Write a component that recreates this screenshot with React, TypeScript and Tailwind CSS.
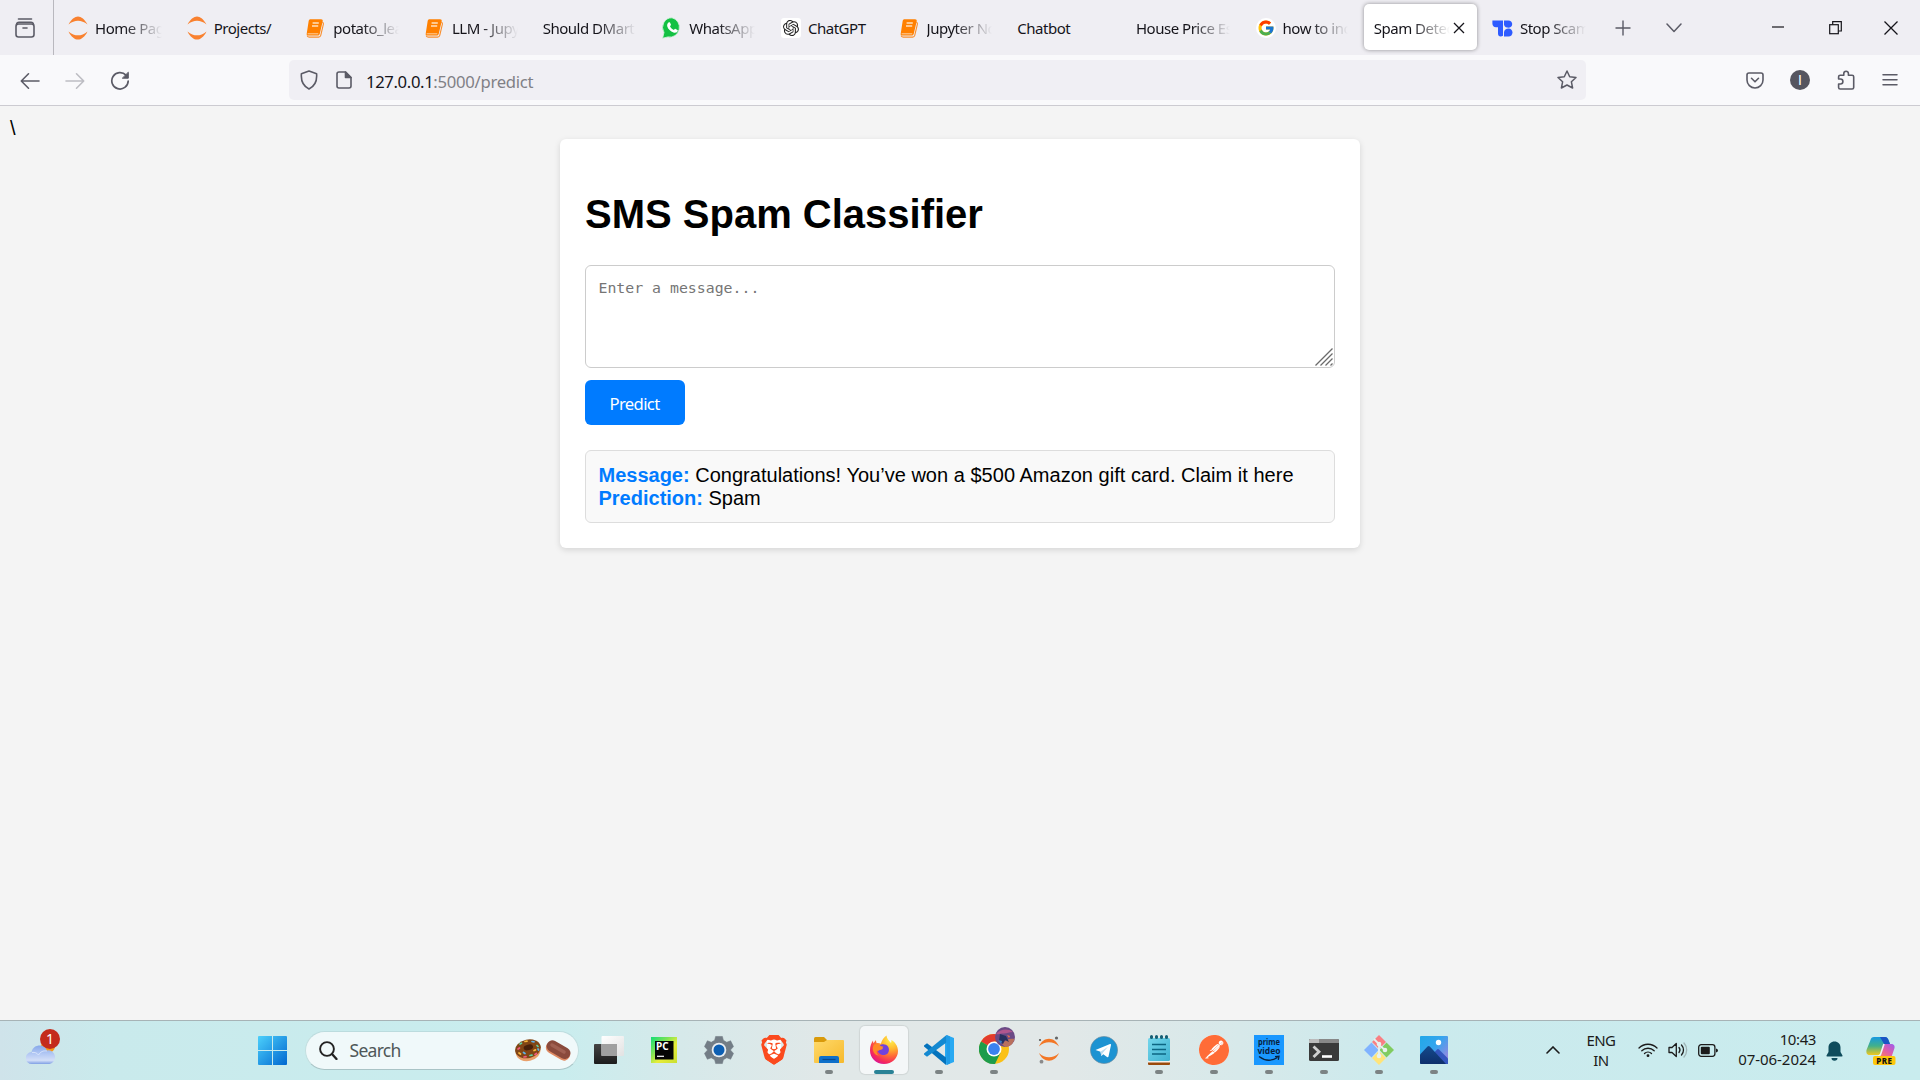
import React from "react";
import { FcGoogle } from "react-icons/fc";
import { SiOpenai, SiBrave, SiPostman } from "react-icons/si";

const UI = "font-['Noto_Sans','Open_Sans',sans-serif]";

/* ---------- Tab favicons ---------- */

const JupyterFav = () => (
  <svg width="20" height="24" viewBox="0 0 20 24" className="shrink-0">
    <path d="M.5 8.600C3 3.200 7 .4 10 .4s7 2.800 9.500 8.200C16.500 5.800 13 4.700 10 4.700S3.500 5.800.5 8.600Z" fill="#f9812f" />
    <path d="M.5 15.400C3 20.800 7 23.600 10 23.600s7-2.800 9.500-8.200c-3 2.800-6.500 3.900-9.500 3.900s-6.500-1.100-9.500-3.900Z" fill="#f9812f" />
  </svg>
);

const BookFav = () => (
  <svg width="20" height="20" viewBox="0 0 20 20" className="mr-px shrink-0">
    <path d="M5.500 1.200h10.600c1.200 0 1.900.9 1.600 2.100l-3 12.800c-.2.900-1 1.500-1.900 1.500H3.200c-1.200 0-1.700-.8-1.500-1.800l2-13c.2-1 .9-1.600 1.800-1.600Z" fill="#ff8000" />
    <path d="M17.200 4.300c1 .2 1.400.9 1.200 1.800l-2.700 11.400c-.2 1-1 1.600-2 1.600H4.100c-1 0-1.800-.6-2-1.400" fill="none" stroke="#f98f2f" strokeWidth="1.100" />
    <path d="m7.600 5 6.200 0M7 8l6.200 0" stroke="#ffe0bd" strokeWidth="1.500" />
    <path d="M2.600 15.800h10.700" stroke="#ffd0a0" strokeWidth="1" />
  </svg>
);

const WhatsFav = () => (
  <span className="ml-px flex h-5 w-5 shrink-0 items-center justify-center">
    <svg width="20" height="22" viewBox="0 0 20 22">
      <path d="M10 .8a9.300 9.600 0 0 0-8 14.700L.6 21.200l5.400-1.300A9.300 9.700 0 1 0 10 .8Z" fill="#13c143" stroke="#d6f3de" strokeWidth=".8" />
      <path d="M6.500 5.500c.5-.5 1.200-.4 1.500.1l.9 1.900c.2.400 0 .8-.9 1.700.9 1.700 2 2.900 3.900 3.800.8-1 1.200-1.300 1.600-1.100l2 1c.4.200.3 1-.1 1.700-.8 1.200-2.300 1.400-3.900.9-3-1-5.400-3.400-6.200-6-.4-1.600.1-3 1.200-4Z" fill="#fff" />
    </svg>
  </span>
);

const GptFav = () => (
  <span className="ml-px flex h-5 w-5 shrink-0 items-center justify-center rounded-[3px] bg-white">
    <SiOpenai size={16} color="#222" />
  </span>
);

const GoogleFav = () => (
  <span className="ml-px flex h-5 w-5 shrink-0 items-center justify-center rounded-full bg-white">
    <FcGoogle size={18} />
  </span>
);

const TbFav = () => (
  <svg width="21" height="17" viewBox="0 0 21 17" className="shrink-0">
    <path d="M2.200.4H11v15.400c-.7.500-1.400.8-2.300.8C7 16.600 6 15.300 6 13.500V7.200H4C1.800 7.200.4 5.700.4 3.800V.4Z" fill="#2e5bff" />
    <path d="M12 .4h4.400c2.200 0 3.800 1.500 3.800 3.700 0 2-1.300 3.600-3.300 3.600-2.300 0-4.300-.6-4.900-3Z" fill="#2e5bff" />
    <path d="M12 16.600V12c.4-2.200 2-3.500 4.600-3.500 2.300 0 3.900 1.700 3.900 4s-1.700 4.100-4 4.100Z" fill="#2e5bff" />
  </svg>
);

type TabInfo = { title: string; icon?: React.ReactNode; fade?: boolean };

const tabsBefore: TabInfo[] = [
  { title: "Home Page", icon: <JupyterFav />, fade: true },
  { title: "Projects/", icon: <JupyterFav /> },
  { title: "potato_leaf", icon: <BookFav />, fade: true },
  { title: "LLM - Jupyter", icon: <BookFav />, fade: true },
  { title: "Should DMart", fade: true },
  { title: "WhatsApp W", icon: <WhatsFav />, fade: true },
  { title: "ChatGPT", icon: <GptFav /> },
  { title: "Jupyter Not", icon: <BookFav />, fade: true },
  { title: "Chatbot" },
  { title: "House Price Est", fade: true },
  { title: "how to incr", icon: <GoogleFav />, fade: true },
];

const Title = ({ text, fade }: { text: string; fade?: boolean }) => (
  <span
    className={
      "min-w-0 flex-1 overflow-hidden whitespace-nowrap text-[15px] leading-6 tracking-[-0.48px] text-[#15141a] " +
      (fade ? "[mask-image:linear-gradient(to_right,black_calc(100%-38px),transparent_100%)]" : "")
    }
  >
    {text}
  </span>
);

const Tab = ({ title, icon, fade }: TabInfo) => (
  <div className="flex h-[55px] w-[118.67px] shrink-0 items-center gap-[7px] pl-[12px] pr-[13px] pt-[1px]">
    {icon}
    <Title text={title} fade={fade} />
  </div>
);

const TabStrip = () => (
  <div className="flex h-[55px] items-center bg-[#efeef3]">
    <div className="flex h-[55px] w-[54px] shrink-0 items-center border-r border-[#b9b8be] pl-[15px]">
      <svg width="20" height="20" viewBox="0 0 20 20" fill="none" stroke="#5b5b66" strokeWidth="1.600" strokeLinecap="round">
        <path d="M3.500 1h13" />
        <path d="M1.500 6.500c.2-1.500 1-2.300 2.500-2.300h12c1.500 0 2.300.8 2.500 2.300" />
        <rect x="1" y="6" width="18" height="13" rx="2.500" />
        <path d="M8 10h4" />
      </svg>
    </div>
    <div className="ml-[2px] flex">
      {tabsBefore.map((t) => (
        <Tab key={t.title} {...t} />
      ))}
      <div className="flex h-[55px] w-[118.67px] shrink-0 items-start px-[2.500px] pt-[4px]">
        <div className="flex h-[46px] w-full items-center rounded-[5px] bg-white pl-[10px] pr-[12px] pt-px shadow-[0_0_4px_rgba(0,0,0,0.4)]">
          <Title text="Spam Detec" fade />
          <svg width="12" height="12" viewBox="0 0 12 12" className="ml-[3px] shrink-0" stroke="#15141a" strokeWidth="1.300">
            <path d="m1 1 10 10M11 1 1 11" />
          </svg>
        </div>
      </div>
      <Tab title="Stop Scams" icon={<TbFav />} fade />
    </div>
    <svg width="16" height="16" viewBox="0 0 16 16" className="ml-[16.500px] mt-px shrink-0" stroke="#5b5b66" strokeWidth="1.400">
      <path d="M8 .5v15M.5 8h15" />
    </svg>
    <svg width="16" height="10" viewBox="0 0 16 10" className="ml-[34.500px] shrink-0" fill="none" stroke="#5b5b66" strokeWidth="1.500" strokeLinecap="round" strokeLinejoin="round">
      <path d="m1 1 7 7.500L15 1" />
    </svg>
    <svg width="12" height="12" viewBox="0 0 12 12" className="ml-[90px] shrink-0" stroke="#15141a" strokeWidth="1.200">
      <path d="M0 5h12" />
    </svg>
    <svg width="13" height="14" viewBox="0 0 13 14" className="ml-[45px] shrink-0" fill="none" stroke="#15141a" strokeWidth="1.200">
      <rect x=".7" y="3.700" width="8.600" height="9" />
      <path d="M3.700 3.500V.7h8.600v9.300H9.500" />
    </svg>
    <svg width="14" height="14" viewBox="0 0 14 14" className="ml-[42.500px] shrink-0" stroke="#15141a" strokeWidth="1.300">
      <path d="m.5.5 13 13M13.500.5l-13 13" />
    </svg>
  </div>
);

const NavBar = () => (
  <div className="flex h-[51px] items-center border-b border-[#cccbd1] bg-[#f9f9fb]">
    <svg width="20" height="18" viewBox="0 0 20 18" className="ml-[20px] mt-px" fill="none" stroke="#5b5b66" strokeWidth="1.600" strokeLinecap="round" strokeLinejoin="round">
      <path d="M19 9H1.500M8.500 1.800 1.300 9l7.200 7.200" />
    </svg>
    <svg width="20" height="18" viewBox="0 0 20 18" className="ml-[25px] mt-px" fill="none" stroke="#bdbdc3" strokeWidth="1.600" strokeLinecap="round" strokeLinejoin="round">
      <path d="M1 9h17.500M11.500 1.800 18.700 9l-7.200 7.200" />
    </svg>
    <svg width="20" height="20" viewBox="0 0 20 20" className="ml-[25px] mt-px" fill="none" stroke="#5b5b66" strokeWidth="1.700" strokeLinecap="round">
      <path d="M16 4.200A8.200 8.200 0 1 0 18.200 10" />
      <path d="M18.300 1.600v5.600h-5.600z" fill="#5b5b66" strokeWidth="1" strokeLinejoin="round" />
    </svg>
    <div className="ml-[159px] flex h-10 w-[1297px] items-center rounded-[5px] bg-[#f0eff4]">
      <svg width="18" height="20" viewBox="0 0 18 20" className="ml-[11px]" fill="none" stroke="#5b5b66" strokeWidth="1.600" strokeLinejoin="round">
        <path d="M9 1 16.600 3.800c.5 6-1.600 12.200-7.600 15.200C3 16 .9 9.800 1.400 3.800Z" />
      </svg>
      <svg width="16" height="18" viewBox="0 0 16 18" className="ml-[18px]" fill="none" stroke="#5b5b66" strokeWidth="1.600" strokeLinejoin="round">
        <path d="M3 1h6.500L15 6.500V15c0 1.300-.7 2-2 2H3c-1.300 0-2-.7-2-2V3c0-1.300.7-2 2-2Z" />
        <path d="M9.500 1v5.500H15Z" fill="#5b5b66" />
      </svg>
      <div className="ml-[14px] mt-[3px] flex-1 whitespace-nowrap text-[16.67px] leading-6 tracking-[-0.28px] text-[#808086]">
        <span className="tracking-[-0.36px] text-[#15141a]">127.0.0.1</span>:5000/predict
      </div>
      <svg width="20" height="20" viewBox="0 0 20 20" className="mr-[9px]" fill="none" stroke="#5b5b66" strokeWidth="1.500" strokeLinejoin="round">
        <path d="m10 1 2.700 5.700 6.300.8-4.600 4.300 1.200 6.200-5.600-3-5.600 3 1.200-6.200L1 7.500l6.300-.8Z" />
      </svg>
    </div>
    <svg width="18" height="17" viewBox="0 0 18 17" className="ml-[160px]" fill="none" stroke="#5b5b66" strokeWidth="1.600" strokeLinecap="round" strokeLinejoin="round">
      <path d="M3 1h12c1.300 0 2 .7 2 2v5a8 8 0 0 1-16 0V3c0-1.300.7-2 2-2Z" />
      <path d="m5.500 6.300 3.500 3.500 3.500-3.500" />
    </svg>
    <div className="ml-[26px] flex h-5 w-5 items-center justify-center rounded-full bg-[#55555f] font-['Liberation_Sans',Arial,sans-serif] text-[14px] leading-none text-white">I</div>
    <svg width="18" height="20" viewBox="0 0 18 20" className="ml-[26.500px]" fill="none" stroke="#5b5b66" strokeWidth="1.600" strokeLinejoin="round">
      <path d="M1.600 9V6.800c0-1 .6-1.600 1.600-1.600h3.600V3.500a2.300 2.300 0 0 1 4.600 0v1.700h3.700c1 0 1.600.6 1.600 1.600v10.600c0 1-.6 1.600-1.600 1.600H3.200c-1 0-1.600-.6-1.600-1.600V14h1.800a2.500 2.500 0 0 0 0-5Z" />
    </svg>
    <svg width="16" height="14" viewBox="0 0 16 14" className="ml-[27.500px]" stroke="#5b5b66" strokeWidth="1.500" strokeLinecap="round">
      <path d="M1 1.700h14M1 6.700h14M1 11.700h14" />
    </svg>
  </div>
);

const PageBody = () => (
  <div className="flex-1 bg-[#f4f4f4] pt-[11px] font-['Liberation_Sans',Arial,sans-serif] text-[20px] leading-[23px] text-black">
    <div className="h-[22px] pl-[10px]">\</div>
    <div className="mx-auto w-[800px] rounded-[6px] bg-white px-[25px] pb-[25px] pt-[52px] shadow-[0_2px_6px_rgba(0,0,0,0.13)]">
      <h1 className="mb-[28px] h-[46px] text-[40px] font-bold leading-[46px]">SMS Spam Classifier</h1>
      <div className="relative h-[103px] rounded-[6px] border border-[#ccc] bg-white pl-[12.500px] pt-[12px] font-['DejaVu_Sans_Mono',monospace] text-[14.85px] leading-5 text-[#757575]">
        Enter a message...
        <svg width="18" height="18" viewBox="0 0 18 18" className="absolute bottom-[1px] right-[1px]" stroke="#6b6b6b" strokeWidth="1.300">
          <path d="M.5 17.500 17.500.5M5.500 17.500l12-12M10.500 17.500l7-7M15.500 17.500l2-2" />
        </svg>
      </div>
      <button className={"mt-[12px] block h-[45px] w-[100px] rounded-[6px] bg-[#007bff] pr-px pt-[2px] text-[16.67px] leading-6 tracking-[-0.65px] text-white " + UI}>
        Predict
      </button>
      <div className="mt-[25px] h-[73px] rounded-[6px] border border-[#ddd] bg-[#f9f9f9] pl-[12.500px] pt-[13px]">
        <div><b className="text-[#007bff]">Message:</b> <span className="tracking-[0.02px]">Congratulations! You’ve won a $500 Amazon gift card. Claim it here</span></div>
        <div><b className="text-[#007bff]">Prediction:</b> Spam</div>
      </div>
    </div>
  </div>
);

/* ---------- Taskbar icons ---------- */

const Weather = () => (
  <svg width="36" height="38" viewBox="0 0 36 38">
    <defs>
      <linearGradient id="cloud" x1="0" y1="0" x2="0" y2="1">
        <stop offset="0" stopColor="#86a8ea" />
        <stop offset=".45" stopColor="#b3c8f4" />
        <stop offset=".8" stopColor="#d3dff8" />
        <stop offset="1" stopColor="#7f9fe4" />
      </linearGradient>
    </defs>
    <circle cx="22" cy="17" r="7" fill="#f59a1c" />
    <path d="M6 35a6 6 0 0 1-.5-12c1-4.500 4.700-6.500 8.100-6.500 3.400 0 6.400 2 7.300 5a6.800 6.800 0 1 1 2.600 13.500Z" fill="url(#cloud)" />
    <path d="M6 23.500c3-.5 5 .5 6.500 2.500 2-3.500 5-4.500 8.400-4" fill="none" stroke="#dbe6fc" strokeWidth=".9" />
    <circle cx="24" cy="10" r="10" fill="#c42b1c" />
    <text x="24" y="15" textAnchor="middle" fontSize="14" fill="#fff" fontFamily="Noto Sans">1</text>
  </svg>
);

const WindowsLogo = () => (
  <svg width="29" height="29" viewBox="0 0 29 29" className="shrink-0">
    <defs>
      <linearGradient id="win" x1="0" y1="0" x2="1" y2="1">
        <stop offset="0" stopColor="#4cd0fb" />
        <stop offset="1" stopColor="#0067d0" />
      </linearGradient>
    </defs>
    <path d="M1 0h13v14H0V1Q0 0 1 0ZM15 0h13q1 0 1 1v13H15ZM0 15h14v14H1q-1 0-1-1ZM15 15h14v13q0 1-1 1H15Z" fill="url(#win)" />
  </svg>
);

const Donut = () => (
  <svg width="58" height="28" viewBox="0 0 58 28">
    <ellipse cx="14" cy="15.500" rx="12.500" ry="9.500" fill="#e9a06b" transform="rotate(-12 14 15)" />
    <ellipse cx="14" cy="12.800" rx="13" ry="9.300" fill="#814515" transform="rotate(-12 14 13)" />
    <ellipse cx="14.500" cy="11.500" rx="4.800" ry="2.800" fill="#47200a" transform="rotate(-14 14 12)" />
    <g strokeWidth="1.700" strokeLinecap="round">
      <path d="m4 13 1.500-1M10 21l2-.4M21 18.500l1.500-1" stroke="#f05a7d" />
      <path d="m6 8 1.500-.8M16 19.500l2-.3M23 9.500l1 1" stroke="#5fd3a4" />
      <path d="m11 5.500 2-.4M5 17l1.500 1M20 14.500l1.500-.6" stroke="#f9b83c" />
      <path d="m18 5.500 2 .4M9.500 16.500l1.500 1M24 13l.6 1" stroke="#5db2e8" />
    </g>
    <rect x="31.500" y="8.500" width="26" height="12.500" rx="6" fill="#e08b63" transform="rotate(30 44 14)" />
    <rect x="32" y="7.500" width="25.500" height="11.500" rx="5.500" fill="#8a4a3c" transform="rotate(30 44 13)" />
    <path d="m38 9 12 7" stroke="#a06052" strokeWidth="3.500" strokeLinecap="round" />
  </svg>
);

const TaskView = () => (
  <svg width="30" height="28" viewBox="0 0 30 28">
    <defs>
      <linearGradient id="tvd" x1="0" y1="0" x2="0" y2="1"><stop offset="0" stopColor="#444" /><stop offset="1" stopColor="#1c1c1c" /></linearGradient>
      <linearGradient id="tvl" x1="0" y1="0" x2="1" y2="1"><stop offset="0" stopColor="#fff" /><stop offset="1" stopColor="#e2e2e2" /></linearGradient>
    </defs>
    <rect x="0" y="8" width="23" height="20" rx="1" fill="url(#tvd)" />
    <rect x="7.500" y="0" width="22.500" height="20" rx="1" fill="url(#tvl)" />
    <rect x="7.500" y="8" width="15.500" height="12" fill="#a0a0a0" />
  </svg>
);

const PyCharm = () => (
  <svg width="26" height="26" viewBox="0 0 26 26">
    <defs>
      <linearGradient id="pc" x1="0" y1="0" x2="1" y2="1">
        <stop offset="0" stopColor="#12dd77" /><stop offset=".35" stopColor="#7fe455" /><stop offset=".6" stopColor="#e8ed3a" /><stop offset="1" stopColor="#c9df31" />
      </linearGradient>
    </defs>
    <rect width="26" height="26" fill="url(#pc)" />
    <rect x="4" y="4" width="18.500" height="18.500" fill="#050505" />
    <text x="5" y="13" fontSize="10" fontWeight="700" fill="#fff" fontFamily="Noto Sans">PC</text>
    <path d="M6 19.300h7" stroke="#fff" strokeWidth="1.200" />
  </svg>
);

const Gear = () => (
  <svg width="30" height="30" viewBox="0 0 30 30">
    <path d="M11.500 1 18.500 1 19.500 5 23 7 27 5.500 30 11.500 26.800 15 30 18.500 27 24.500 23 23 19.500 25 18.500 29 11.500 29 10.500 25 7 23 3 24.500 0 18.500 3.200 15 0 11.500 3 5.500 7 7 10.500 5Z" fill="#737d86" stroke="#737d86" strokeWidth=".6" strokeLinejoin="round" transform="translate(.5 .5) scale(.967)" />
    <circle cx="15" cy="15" r="7.300" fill="#e9eef2" />
    <circle cx="15" cy="15" r="5.500" fill="#0d5fb3" />
  </svg>
);

const Brave = () => (
  <div className="flex h-[30px] w-[30px] items-center justify-center">
    <div className="[clip-path:polygon(20%_0,80%_0,100%_18%,90%_75%,50%_100%,10%_75%,0_18%)] bg-[linear-gradient(#fff,#fff)] bg-[length:14px_20px] bg-center bg-no-repeat">
      <SiBrave size={30} color="#fb4a1e" />
    </div>
  </div>
);

const Folder = () => (
  <svg width="30" height="26" viewBox="0 0 30 26">
    <defs><linearGradient id="fo" x1="0" y1="0" x2="1" y2="1"><stop offset="0" stopColor="#ffd96a" /><stop offset="1" stopColor="#f6b92c" /></linearGradient></defs>
    <path d="M0 1.500Q0 0 1.500 0H10l3 3v5H0Z" fill="#d99a0b" />
    <path d="M0 5h10l3-2h16q1 0 1 1v21q0 1-1 1H1q-1 0-1-1Z" fill="url(#fo)" />
    <path d="M5 26v-5q0-2 2-2h16q2 0 2 2v5Z" fill="#0f70ca" />
    <path d="M8.500 22.500h13" stroke="#08498f" strokeWidth="1.200" />
  </svg>
);

const Firefox = () => (
  <svg width="30" height="30" viewBox="0 0 30 30">
    <defs>
      <radialGradient id="ff" cx=".75" cy=".15" r=".95">
        <stop offset="0" stopColor="#fff44f" /><stop offset=".35" stopColor="#ffb52e" /><stop offset=".6" stopColor="#ff6b36" /><stop offset=".85" stopColor="#f5285c" /><stop offset="1" stopColor="#d8159a" />
      </radialGradient>
    </defs>
    <path d="M15 29C7 29 1 23 1 15.500 1 11 2.300 7.800 4 5.500c0 1.200.2 2 .5 2.800C5.500 6.500 6.500 5.500 7 5.200c0 1.200.3 2.200.8 3 1.500-.3 3 0 4 .5C13 5 15 2 17.500.5c0 3 2.500 5 4.500 7.500.5-1 .5-2 .3-3C26 7 29 11 29 16c0 7.300-6 13-14 13Z" fill="url(#ff)" />
    <path d="M10 11c2-2.500 7-2.500 9 .5 2 3 .8 8-3.500 8.500-4.500.4-7-2.500-7-5.500 2 1 4 .5 5.500-1-1.500-.6-3-1-4-2.500Z" fill="#7142dc" />
    <path d="M5 9.500c2-.8 4-.7 6 1 .7.700 2 1 3.500 1.300-.8 1.800-3 1.800-4 3.200-.8 1-2 1-2.500.5-.8 1.800 0 4 2 5-5-.2-8-6-5-11Z" fill="#ff8a26" />
  </svg>
);

const VSCode = () => (
  <svg width="30" height="30" viewBox="0 0 30 30">
    <path d="M22.500 0 30 3v24l-7.500 3L21 22V8Z" fill="#29a9f2" />
    <path d="m0 10.500 3-2.200 19 14.200V30L0 11.500Z" fill="#0473bd" />
    <path d="m0 19.500 3 2.200L22.500 7.500V0L0 18.500Z" fill="#1489d1" />
    <path d="M22.500 0 26 1.500v27L22.500 30Z" fill="#1f9ce8" />
  </svg>
);

const Chrome = () => (
  <svg width="38" height="38" viewBox="0 0 38 38">
    <g transform="translate(15 22)">
      <circle r="15" fill="#fbc116" />
      <path d="M0 0-13-7.500A15 15 0 0 1 13-7.500H0Z" fill="#e33b2e" />
      <path d="M0 0-13-7.500A15 15 0 0 0 1 15L6.500 3.700Z" fill="#1e9c4b" />
      <circle r="7.500" fill="#fff" />
      <circle r="5.900" fill="#3c82f0" />
    </g>
    <circle cx="26" cy="10" r="10" fill="#6b4a86" />
    <path d="M17 7c4-5 12-6 17-2-4 0-7 2-10 1.500S19 8 17 7Z" fill="#b0568e" />
    <path d="M23 17c3-4 7-6 12.500-5C34 17 31 20 26 20Z" fill="#b9705d" />
    <path d="m21 7 6 2 3 6-4-2-2 4-4-3Z" fill="#28305e" />
    <path d="m19 13 4 1-1 3Z" fill="#397cc3" />
    <path d="m28 8 3 1-1 2Z" fill="#f17447" />
  </svg>
);

const JupyterApp = () => (
  <svg width="22" height="28" viewBox="0 0 22 28">
    <path d="M1 10.500C3 5.500 7 2.800 11 2.800s8 2.700 10 7.700C18 7.500 14.500 6.300 11 6.300S4 7.500 1 10.500ZM1 17c2 5 6 7.700 10 7.700s8-2.700 10-7.700c-3 3-6.500 4.200-10 4.200S4 20 1 17Z" fill="#f37726" />
    <circle cx="18.500" cy="2" r="1.600" fill="#666" />
    <circle cx="2" cy="4" r="1.100" fill="#555" />
    <circle cx="3.500" cy="25.700" r="1.900" fill="#8b8b8b" />
  </svg>
);

const Telegram = () => (
  <svg width="28" height="28" viewBox="0 0 28 28">
    <circle cx="14" cy="14" r="13.600" fill="#1d93d2" stroke="#6e8a99" strokeWidth=".6" />
    <path d="m5.500 14 14.500-6q1.200-.3 1 1l-2.500 11.500q-.4 1.200-1.500.5l-3.700-2.800-2 1.900-.8-4.300Z" fill="#fff" />
    <path d="m10.500 15.800 7.500-5-5.300 6.200-1.400 3.100Z" fill="#bcdcef" />
  </svg>
);

const Notepad = () => (
  <svg width="22" height="30" viewBox="0 0 22 30">
    <defs><linearGradient id="np" x1="0" y1="0" x2="1" y2="1"><stop offset="0" stopColor="#74d6ec" /><stop offset="1" stopColor="#3fb2d0" /></linearGradient></defs>
    <rect y="25" width="22" height="5" rx="1" fill="#9a4a0c" />
    <rect y="24" width="22" height="3.500" fill="#f5f0ea" />
    <rect y="3" width="22" height="23" rx="1.500" fill="url(#np)" />
    <path d="M4 9.500h14M4 14.500h14M4 19h14" stroke="#0c6582" strokeWidth="1.500" />
    <path d="M3.500 1.500v1M8.500 1.500v1M13.500 1.500v1M18.500 1.500v1" stroke="#155e74" strokeWidth="3" strokeLinecap="round" />
  </svg>
);

const Prime = () => (
  <svg width="30" height="30" viewBox="0 0 30 30">
    <rect width="30" height="30" fill="#1a98ff" />
    <g fill="#08233f" fontFamily="Noto Sans" fontWeight="700" fontSize="8.500" textAnchor="middle">
      <text x="15" y="10" textLength="22" lengthAdjust="spacingAndGlyphs">prime</text>
      <text x="15" y="18.700" textLength="23" lengthAdjust="spacingAndGlyphs">video</text>
    </g>
    <path d="M5 21.500c6 4.500 13 4.500 18.500 1M21 21.700l4-.4-.7 3.500" fill="none" stroke="#08233f" strokeWidth="1.300" />
  </svg>
);

const Terminal = () => (
  <svg width="30" height="22" viewBox="0 0 30 22">
    <rect width="30" height="22" rx="1.500" fill="#3a3a3a" />
    <path d="M0 4V1.500Q0 0 1.500 0h27Q30 0 30 1.500V4Z" fill="#888" />
    <path d="M0 4V1.500Q0 0 1.500 0H10v4Z" fill="#bbb" />
    <path d="m4.500 7.500 5.500 5.200L4.500 18" fill="none" stroke="#cfcfcf" strokeWidth="2.800" />
    <path d="M13 17.500h10" stroke="#fff" strokeWidth="2.600" />
  </svg>
);

const GitIcon = () => (
  <svg width="30" height="30" viewBox="0 0 30 30">
    <path d="m15 0 7 7-7 7-7-7Z" fill="#f97f83" />
    <path d="m7.500 7.500 7 7.500-7 7.500L0 15Z" fill="#80b3ff" />
    <path d="m22.500 7.500 7.500 7.500-7.500 7.500-7-7.500Z" fill="#80cc60" />
    <path d="m15 16 7 7-7 7-7-7Z" fill="#ffe47a" />
    <path d="m10 4 5 5v12M15 10l6 5" stroke="#e6f2f0" strokeWidth="1.800" fill="none" />
    <g fill="#e6f2f0"><circle cx="15" cy="9" r="2.300" /><circle cx="15" cy="21" r="2.300" /><circle cx="21" cy="15" r="2.300" /></g>
  </svg>
);

const Photos = () => (
  <svg width="28" height="28" viewBox="0 0 28 28">
    <defs>
      <linearGradient id="ph" x1="0" y1="0" x2="1" y2=".8"><stop offset="0" stopColor="#22a8e8" /><stop offset=".5" stopColor="#35a5ee" /><stop offset="1" stopColor="#9a86e0" /></linearGradient>
      <linearGradient id="pm" x1="0" y1="0" x2="0" y2="1"><stop offset="0" stopColor="#144a8c" /><stop offset="1" stopColor="#0e2f6c" /></linearGradient>
    </defs>
    <rect width="28" height="28" rx="1" fill="url(#ph)" />
    <path d="m12 19 5-5.500q1-1 2 0l9 9V28H12Z" fill="#3456bf" />
    <path d="m0 18.500 7.500-8q1.200-1 2.300 0L26 28H1q-1 0-1-1Z" fill="url(#pm)" />
    <circle cx="18.500" cy="6.500" r="2.700" fill="#fff" />
  </svg>
);

const Postman = () => (
  <div className="flex h-[30px] w-[30px] items-center justify-center rounded-full bg-white">
    <SiPostman size={30} color="#ff6c37" />
  </div>
);

const apps: { name: string; icon: React.ReactNode; open?: boolean; active?: boolean }[] = [
  { name: "taskview", icon: <TaskView /> },
  { name: "pycharm", icon: <PyCharm /> },
  { name: "settings", icon: <Gear /> },
  { name: "brave", icon: <Brave /> },
  { name: "explorer", icon: <Folder />, open: true },
  { name: "firefox", icon: <Firefox />, active: true },
  { name: "vscode", icon: <VSCode />, open: true },
  { name: "chrome", icon: <div className="-mt-2 ml-2"><Chrome /></div>, open: true },
  { name: "jupyter", icon: <JupyterApp /> },
  { name: "telegram", icon: <Telegram /> },
  { name: "notepad", icon: <Notepad />, open: true },
  { name: "postman", icon: <Postman />, open: true },
  { name: "prime", icon: <Prime />, open: true },
  { name: "terminal", icon: <Terminal />, open: true },
  { name: "git", icon: <GitIcon />, open: true },
  { name: "photos", icon: <Photos />, open: true },
];

const Copilot = () => (
  <svg width="30" height="30" viewBox="0 0 30 30">
    <defs>
      <linearGradient id="cp1" x1="0" y1="0" x2="0" y2="1"><stop offset="0" stopColor="#1799e0" /><stop offset=".5" stopColor="#42b08a" /><stop offset="1" stopColor="#f2c81d" /></linearGradient>
      <linearGradient id="cp2" x1="1" y1="0" x2="0" y2="1"><stop offset="0" stopColor="#9b5cf0" /><stop offset=".5" stopColor="#e25da6" /><stop offset="1" stopColor="#ff8a4c" /></linearGradient>
    </defs>
    <path d="M8 1h11c2 0 3 1.500 3.500 3L24 8h-6l-4 11H4c-3 0-4-2-3.500-5L4.500 4C5 2 6 1 8 1Z" fill="url(#cp1)" />
    <path d="M14 1h5c2 0 3 1.500 3.500 3L24 8h-6Z" fill="#1a55c4" />
    <path d="M18 8h7c3 0 4 2 3.500 4l-3 9H11c2 0 3-1 3.500-3l2-8q.5-2 1.500-2Z" fill="url(#cp2)" />
    <path d="M18 8 14.500 18.500q-.8 1.500-2.500 1.500" fill="none" stroke="#e9f6f6" strokeWidth="1.600" />
    <rect x="7" y="20" width="22.500" height="9" rx="2" fill="#fdc70c" />
    <text x="18.300" y="27.500" textAnchor="middle" fontSize="8" fontWeight="800" letterSpacing=".5" fill="#111" fontFamily="Noto Sans">PRE</text>
  </svg>
);

const Taskbar = () => (
  <div className="flex h-[60px] items-center border-t border-[#a7b3b6] bg-[linear-gradient(90deg,#cfe3ea_0px,#c9eaec_110px,#c9edee_560px,#d6e9ea_680px,#e1e8e8_830px,#e2e8e8_1060px,#d7e9ea_1240px,#cbeaed_1400px,#c9ecee_1920px)] pb-px">
    <div className="flex h-[58px] w-[258px] shrink-0 items-start pl-[26px] pt-[8px]"><Weather /></div>
    <WindowsLogo />
    <div className="ml-[17.500px] flex h-[39px] w-[274px] shrink-0 items-center rounded-full border border-b-[#a9c4c6] border-x-[#c3dfe0] border-t-[#bcdcde] bg-[#f0f9fa]">
      <svg width="19" height="19" viewBox="0 0 19 19" className="ml-[13px]" fill="none" stroke="#222" strokeWidth="1.900" strokeLinecap="round">
        <circle cx="8" cy="8" r="6.900" />
        <path d="m13 13 4.500 5" strokeWidth="2.300" />
      </svg>
      <span className="ml-[12px] flex-1 text-[17.500px] leading-6 tracking-[-0.7px] text-[#4f5758]">Search</span>
      <div className="mr-[6px]"><Donut /></div>
    </div>
    <div className="ml-[3px] flex">
      {apps.map((a) => (
        <div key={a.name} className="flex w-[55px] shrink-0 justify-center">
          <div className={"relative flex h-12 w-12 items-center justify-center rounded-[5px] " + (a.active ? "bg-[#f4f7f8] shadow-[0_0_1px_1px_rgba(0,0,0,0.08)]" : "")}>
            <div className="flex shrink-0">{a.icon}</div>
            {a.open && <span className="absolute bottom-0 left-5 h-1 w-2 rounded-full bg-[#7c8384]" />}
            {a.active && <span className="absolute bottom-0 left-[14px] h-1 w-5 rounded-full bg-[#2a8296]" />}
          </div>
        </div>
      ))}
    </div>
    <svg width="14" height="8" viewBox="0 0 14 8" className="ml-[84.500px] shrink-0" fill="none" stroke="#1b1b1b" strokeWidth="1.600" strokeLinecap="round">
      <path d="m1 7 6-6 6 6" />
    </svg>
    <div className="-mt-px ml-[21px] w-[40px] text-center text-[15px] leading-[20px] tracking-[-0.6px] text-[#1b1b1b]">ENG<br />IN</div>
    <svg width="20" height="16" viewBox="0 0 20 16" className="ml-[17px] shrink-0" fill="none" stroke="#1b1b1b" strokeWidth="1.300" strokeLinecap="round">
      <path d="M1 6a12.700 12.700 0 0 1 18 0M3.800 8.800a8.800 8.800 0 0 1 12.400 0M6.500 11.500a5 5 0 0 1 7 0" />
      <circle cx="10" cy="13.700" r="1.400" fill="#1b1b1b" stroke="none" />
    </svg>
    <svg width="20" height="16" viewBox="0 0 20 16" className="ml-[10px] shrink-0" fill="none" stroke="#1b1b1b" strokeWidth="1.300" strokeLinecap="round" strokeLinejoin="round">
      <path d="M1 5.500h3L8.300 1.500v13L4 10.500H1Z" />
      <path d="M11 5.500a4 4 0 0 1 0 5M13.500 3a7.300 7.300 0 0 1 0 10" />
      <path d="M16 1a10.500 10.500 0 0 1 0 14" stroke="#9fb4b5" />
    </svg>
    <svg width="20" height="13" viewBox="0 0 20 13" className="ml-[10px] shrink-0">
      <rect x=".7" y=".7" width="16.200" height="11.600" rx="2.500" fill="none" stroke="#1b1b1b" strokeWidth="1.300" />
      <rect x="2.800" y="2.800" width="9" height="7.400" rx="1" fill="#1b1b1b" />
      <path d="M18 4.500q2 .3 2 2t-2 2Z" fill="#1b1b1b" />
    </svg>
    <div className="-mt-[2px] ml-[8px] w-[90px] text-right text-[15px] leading-[20px] tracking-[-0.05px] text-[#1b1b1b]"><span className="tracking-[-0.4px]">10:43</span><br />07-06-2024</div>
    <svg width="17" height="20" viewBox="0 0 17 20" className="ml-[10px] mt-[2px] shrink-0" fill="#0f4c5c">
      <path d="M8.500.5C12 .5 14.500 3 14.500 6.500V11l2 3.500q.4 1-.8 1H1.300q-1.200 0-.8-1l2-3.500V6.500C2.500 3 5 .5 8.500.5ZM5.500 17h6a3 2.800 0 0 1-6 0Z" />
    </svg>
    <div className="ml-[23px] mt-[2px] shrink-0"><Copilot /></div>
  </div>
);

export default function App() {
  return (
    <div className={"flex h-[1080px] w-[1920px] flex-col overflow-hidden " + UI}>
      <TabStrip />
      <NavBar />
      <PageBody />
      <Taskbar />
    </div>
  );
}
